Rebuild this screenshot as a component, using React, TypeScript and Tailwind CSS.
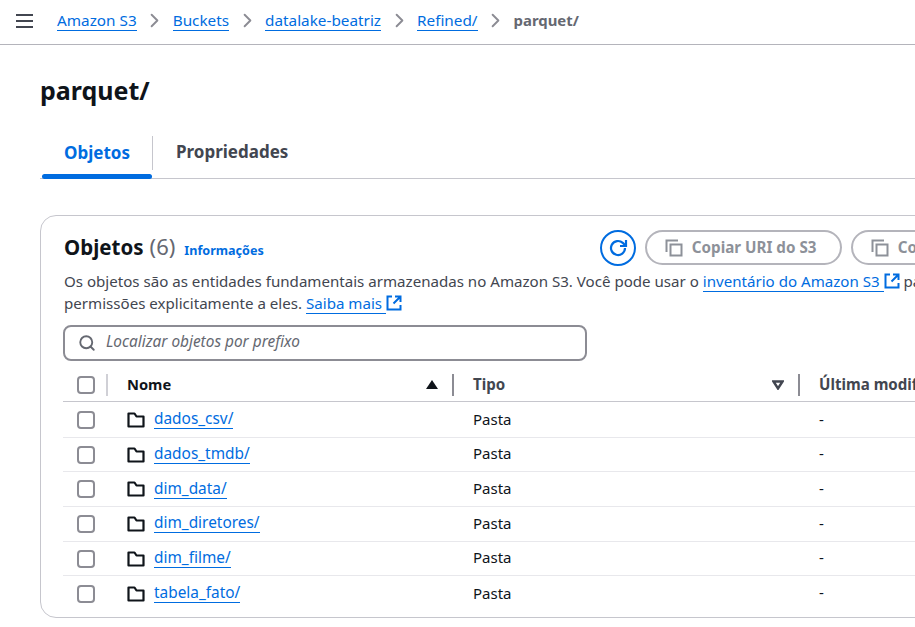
import { ChevronRight, Search } from "lucide-react";

const crumbs = ["Amazon S3", "Buckets", "datalake-beatriz", "Refined/"];
const rows = ["dados_csv/", "dados_tmdb/", "dim_data/", "dim_diretores/", "dim_filme/", "tabela_fato/"];

function Checkbox() {
  return <div className="w-[18px] h-[18px] rounded-[4px] border-2 border-[#8c8c94] bg-white" />;
}

function CopyIcon() {
  return (
    <svg width="18" height="18" viewBox="0 0 18 18" fill="none" stroke="#8d9199" strokeWidth="2">
      <path d="M1.5 13V1.5H13" />
      <rect x="5.5" y="5.5" width="11" height="11" />
    </svg>
  );
}

function ExternalIcon() {
  return (
    <svg className="inline-block align-[-2px]" width="16" height="16" viewBox="0 0 16 16" fill="none" stroke="#006ce0" strokeWidth="2">
      <path d="M6 1.5H1.5v13h13V10" />
      <path d="M9 1.5h5.5V7M14 2L7.5 8.5" />
    </svg>
  );
}

function FolderIcon() {
  return (
    <svg width="18" height="16" viewBox="0 0 18 16" fill="none" stroke="#0f141a" strokeWidth="2.2" strokeLinejoin="round">
      <path d="M1.5 1.5h6l2 3h7v10h-15z" />
    </svg>
  );
}

function CopyButton({ label, className }: { label: string; className: string }) {
  return (
    <div className={`h-[35px] rounded-full border-2 border-[#b4b4bb] flex items-center gap-[9px] pl-[18px] text-[15.2px] font-bold text-[#8d9199] shrink-0 ${className}`}>
      <CopyIcon />
      <span className="-mt-[1px]">{label}</span>
    </div>
  );
}

export default function App() {
  return (
    <div className="w-[915px] h-[627px] overflow-hidden bg-white font-['Noto_Sans',sans-serif] text-[15.1px] text-[#424650]">
      <header className="h-[45px] border-b border-[#b4b4bb] flex items-center pl-[16px] text-[15.3px]">
        <div className="w-[17px] flex flex-col gap-[4px] mr-[24px] -mt-[3px]">
          <div className="h-[2px] bg-[#424650]" />
          <div className="h-[2px] bg-[#424650]" />
          <div className="h-[2px] bg-[#424650]" />
        </div>
        <nav className="flex items-center -mt-[3px]">
          {crumbs.map((c) => (
            <div key={c} className="flex items-center">
              <span className="text-[#006ce0] border-b border-[#006ce0] leading-[19px]">{c}</span>
              <ChevronRight className="w-[23px] h-[23px] mx-[6.5px] text-[#8c8c94]" strokeWidth={2} />
            </div>
          ))}
          <span className="font-bold text-[14.9px] text-[#656871]">parquet/</span>
        </nav>
      </header>

      <main className="px-[40px]">
        <h1 className="mt-[25px] h-[40px] leading-[40px] text-[25px] font-bold text-[#0f141a]">parquet/</h1>

        <div className="mt-[26px] -mr-[40px] h-[43px] flex border-b border-[#c6c6cd] items-start">
          <div className="relative w-[111px] h-[43px] ml-[2px]">
            <div className="h-[34px] flex items-center pl-[22px] pb-[2px] text-[17px] font-bold text-[#006ce0] border-r border-[#c6c6cd] leading-none">
              Objetos
            </div>
            <div className="absolute left-0 bottom-0 w-[110px] h-[5px] rounded-full bg-[#006ce0]" />
          </div>
          <div className="h-[34px] flex items-center pl-[23px] pb-[2px] text-[17px] font-bold text-[#424650]">Propriedades</div>
        </div>

        <section className="mt-[36px] w-[1100px] h-[403px] rounded-[16px] border border-[#c6c6cd] pt-[14px]">
          <div className="flex items-start pl-[23px]">
            <div className="flex items-baseline pt-[1px]">
              <h2 className="text-[20.5px] font-bold text-[#0f141a] leading-[30px]">Objetos</h2>
              <span className="ml-[6px] text-[22px] text-[#656871] leading-[30px]">(6)</span>
              <span className="ml-[9px] text-[12.6px] font-bold text-[#006ce0]">Informações</span>
            </div>
            <div className="ml-[336px] w-[36px] h-[36px] rounded-full border-2 border-[#006ce0] flex items-center justify-center shrink-0">
              <svg width="22" height="22" viewBox="0 0 22 22" fill="none" stroke="#006ce0" strokeWidth="2.2">
                <path d="M18 11a7 7 0 1 1-2.2-5.1L18.5 8.5" />
                <path d="M19 3v6h-6" />
              </svg>
            </div>
            <CopyButton label="Copiar URI do S3" className="ml-[9px] w-[197px]" />
            <CopyButton label="Copiar URL" className="ml-[9px] w-[160px]" />
          </div>

          <p className="pl-[23px] mt-[4px] leading-[22px] whitespace-nowrap">
            Os objetos são as entidades fundamentais armazenadas no Amazon S3. Você pode usar o{" "}
            <span className="text-[#006ce0] border-b border-[#006ce0]">inventário do Amazon S3 </span>
            <ExternalIcon /> para obter uma lista de todos os objetos em seu bucket.
            <br />
            permissões explicitamente a eles.{" "}
            <span className="text-[#006ce0] border-b border-[#006ce0]">Saiba mais </span>
            <ExternalIcon />
          </p>

          <div className="ml-[22px] mt-[11px] w-[524px] h-[36px] rounded-[8px] border-2 border-[#8c8c94] flex items-center pl-[13px] gap-[10px]">
            <Search className="w-[18px] h-[18px] text-[#656871]" strokeWidth={2.5} />
            <span className="italic text-[#656871] text-[15.4px] -mt-[2px]">Localizar objetos por prefixo</span>
          </div>

          <div className="ml-[22px] mt-[7px] h-[34px] flex items-center border-b border-[#c6c6cd]">
            <div className="w-[45px] pl-[14px] flex items-center shrink-0 relative h-[22px]">
              <Checkbox />
              <div className="absolute right-0 top-0 w-[2px] h-[22px] bg-[#d0d0d6]" />
            </div>
            <div className="w-[346px] pl-[19px] h-[22px] flex items-center justify-between pr-[14px] border-r-2 border-[#8c8c94] font-bold text-[14.7px] text-[#0f141a] shrink-0">
              <span>Nome</span>
              <div className="w-0 h-0 border-x-[6px] border-x-transparent border-b-[9px] border-b-[#0f141a]" />
            </div>
            <div className="w-[346px] pl-[19px] h-[22px] flex items-center justify-between pr-[14px] border-r-2 border-[#8c8c94] font-bold text-[#424650] shrink-0">
              <span>Tipo</span>
              <svg width="12" height="10" viewBox="0 0 12 10" fill="none" stroke="#424650" strokeWidth="2.4">
                <path d="M1.5 1.5h9L6 8.5z" />
              </svg>
            </div>
            <div className="pl-[19px] font-bold text-[#424650] whitespace-nowrap">Última modificação</div>
          </div>

          <div className="pt-[1px]">
            {rows.map((r, i) => (
              <div key={r} className={`ml-[22px] h-[34.7px] flex items-center ${i < rows.length - 1 ? "border-b border-[#e8e8ec]" : ""}`}>
                <div className="w-[45px] pl-[14px] shrink-0">
                  <Checkbox />
                </div>
                <div className="w-[346px] pl-[19px] flex items-center gap-[9px] shrink-0 text-[15.4px]">
                  <FolderIcon />
                  <span className="text-[#006ce0] border-b border-[#006ce0] leading-[19px] -mt-[1px]">{r}</span>
                </div>
                <div className="w-[346px] pl-[19px] shrink-0 text-[#0f141a] text-[15px] -mt-[2px]">Pasta</div>
                <div className="pl-[19px] text-[#0f141a] -mt-[2px]">-</div>
              </div>
            ))}
          </div>
        </section>
      </main>
    </div>
  );
}
